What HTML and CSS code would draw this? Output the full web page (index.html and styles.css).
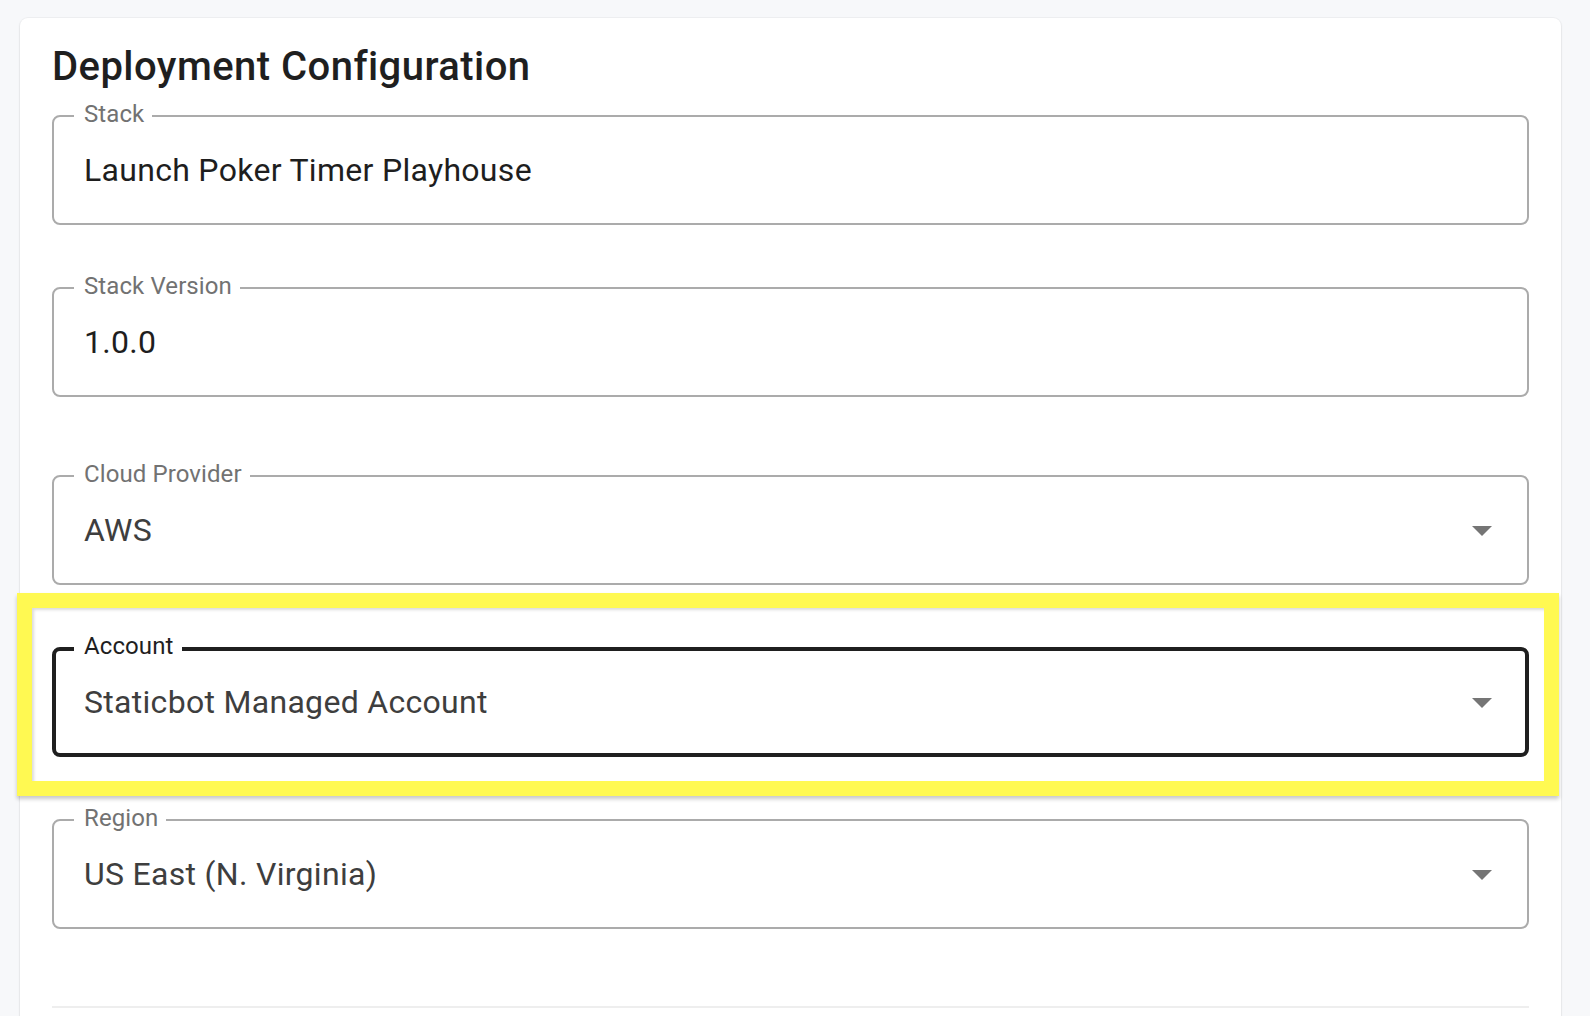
FILE: index.html
```html
<!DOCTYPE html>
<html lang="en">
<head>
  <meta charset="UTF-8" />
  <meta name="viewport" content="width=device-width, initial-scale=1.0" />
  <title>Deployment Configuration</title>
  <link rel="stylesheet" href="styles.css">
</head>
<body>
  <div class="page">
    <!-- ========== DEPLOYMENT CARD ========== -->
    <section class="card">
      <h2 class="card-title">Deployment Configuration</h2>

      <!-- text fields -->
      <div class="field-group">
        <div class="field">
          <span class="field-label">Stack</span>
          <div class="field-box">
            <span class="field-value">Launch Poker Timer Playhouse</span>
          </div>
        </div>

        <div class="field">
          <span class="field-label">Stack Version</span>
          <div class="field-box">
            <span class="field-value">1.0.0</span>
          </div>
        </div>
      </div>

      <!-- select fields -->
      <div class="field-group">
        <div class="field">
          <span class="field-label">Cloud Provider</span>
          <div class="field-box select">
            <span class="field-value">AWS</span>
            <svg class="select-arrow" viewBox="0 0 24 24" width="48" height="48"><path d="M7 10l5 5 5-5z"/></svg>
          </div>
        </div>

        <div class="field focused">
          <div class="highlight"></div>
          <span class="field-label">Account</span>
          <div class="field-box select">
            <span class="field-value">Staticbot Managed Account</span>
            <svg class="select-arrow" viewBox="0 0 24 24" width="48" height="48"><path d="M7 10l5 5 5-5z"/></svg>
          </div>
        </div>

        <div class="field">
          <span class="field-label">Region</span>
          <div class="field-box select">
            <span class="field-value">US East (N. Virginia)</span>
            <svg class="select-arrow" viewBox="0 0 24 24" width="48" height="48"><path d="M7 10l5 5 5-5z"/></svg>
          </div>
        </div>
      </div>

      <hr class="divider">
    </section>
  </div>
</body>
</html>
```

FILE: styles.css
```css
* {
  margin: 0;
  padding: 0;
  box-sizing: border-box;
}

body {
  font-family: 'Roboto', 'Liberation Sans', sans-serif;
  background: #f7f8fa;
  width: 1590px;
  height: 1016px;
  overflow: hidden;
}

.page {
  padding: 18px 29px 0 20px;
}

/* =========================================
   CARD
   ========================================= */
.card {
  background: #fff;
  border-radius: 8px;
  box-shadow: 0 1px 3px rgba(0, 0, 0, 0.08), 0 0 0 1px rgba(0, 0, 0, 0.03);
  padding: 26px 32px 60px 32px;
}

.card-title {
  font-size: 40px;
  line-height: 46px;
  font-weight: 500;
  color: #1f1f1f;
  letter-spacing: 0.45px;
}

.field-group {
  display: flex;
  flex-direction: column;
  gap: 62px;
  margin-top: 78px;
}

.card-title + .field-group {
  margin-top: 25px;
}

/* =========================================
   OUTLINED FIELDS
   ========================================= */
.field {
  position: relative;
}

.field-box {
  height: 110px;
  border: 2px solid #ababab;
  border-radius: 8px;
  display: flex;
  align-items: center;
  padding: 0 0 0 30px;
}

.field-label {
  position: absolute;
  top: -13px;
  left: 22px;
  padding: 0 8px 0 10px;
  background: #fff;
  font-size: 24px;
  line-height: 24px;
  color: #727272;
  letter-spacing: 0.1px;
  z-index: 1;
}

.field-value {
  flex: 1;
  font-size: 32px;
  letter-spacing: 0.3px;
  color: #1e1e1e;
}

.select .field-value {
  color: #3e3e3e;
}

.select-arrow {
  fill: #757575;
  margin-right: 21px;
}

/* focused field */
.focused .field-box {
  border: 4px solid #1f1f1f;
  padding-left: 28px;
}

.focused .field-label {
  color: #1f1f1f;
}

.focused .select-arrow {
  margin-right: 19px;
}

/* yellow annotation frame */
.highlight {
  position: absolute;
  top: -54px;
  left: -35px;
  right: -30px;
  bottom: -39px;
  border: 15px solid #fff952;
  box-shadow: 0 3px 4px rgba(0, 0, 0, 0.22), inset 2px 2px 3px rgba(0, 0, 0, 0.14);
  pointer-events: none;
}

.divider {
  border: none;
  height: 2px;
  background: #eeeeee;
  margin-top: 77px;
}
```
